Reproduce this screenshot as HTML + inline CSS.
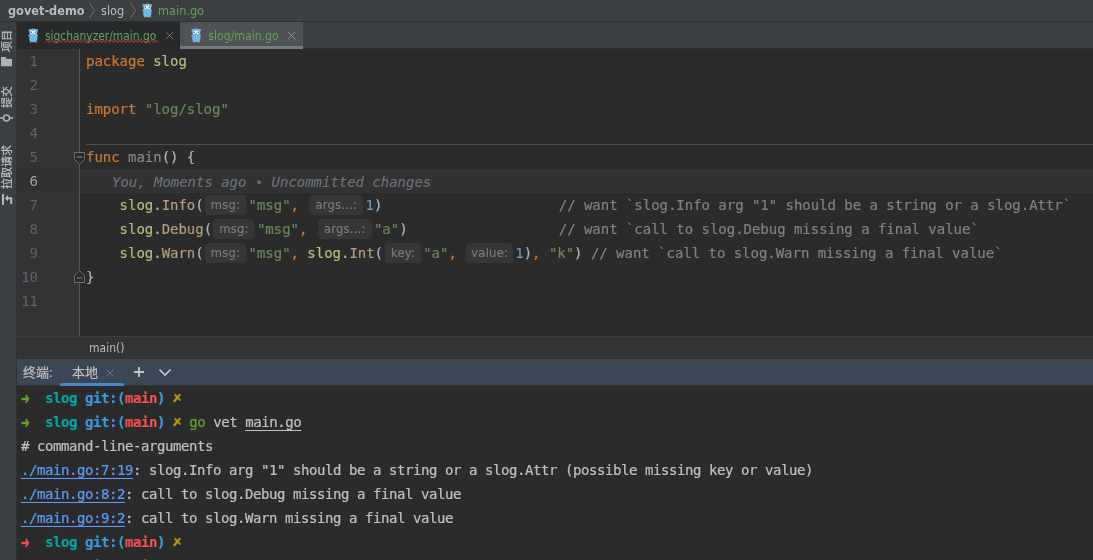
<!DOCTYPE html>
<html lang="zh">
<head>
<meta charset="utf-8">
<title>govet-demo – slog/main.go</title>
<style>
html,body{margin:0;padding:0;}
body{width:1093px;height:560px;overflow:hidden;background:#2b2b2b;position:relative;
  font-family:"DejaVu Sans Condensed","Liberation Sans","Noto Sans CJK SC",sans-serif;color:#bbbbbb;}
.abs{position:absolute;}
/* ---------- top navigation bar ---------- */
#nav{left:0;top:0;width:1093px;height:21px;background:#3c3f41;border-bottom:1px solid #2f3133;}
#nav span{position:absolute;top:-0.4px;line-height:21px;font-size:12.6px;white-space:pre;}
/* ---------- left tool stripe ---------- */
#stripe{left:0;top:22px;width:16px;height:538px;background:#3c3f41;border-right:1px solid #2f3133;}
.vt{position:absolute;left:1px;height:13px;transform-origin:0 0;transform:rotate(-90deg);white-space:pre;
  font-family:"Liberation Sans","Noto Sans CJK SC",sans-serif;font-size:11px;line-height:13px;color:#c0c0c0;-webkit-text-stroke:0.2px currentColor;}
/* ---------- editor tabs ---------- */
#tabs{left:17px;top:22px;width:1076px;height:27px;background:#3c3f41;}
.tab{position:absolute;top:0;height:27px;}
.tab .t{position:absolute;top:0.6px;line-height:26px;font-size:11.9px;color:#62a355;white-space:pre;}
/* ---------- editor ---------- */
#gutter{left:17px;top:49px;width:62px;height:287px;background:#313335;border-right:1px solid #555555;}
#editor{left:80px;top:49px;width:1013px;height:287px;background:#2b2b2b;}
.ln{position:absolute;right:41px;width:40px;text-align:right;height:24px;line-height:24px;
  font-family:"DejaVu Sans Mono","Liberation Mono",monospace;font-size:14px;letter-spacing:-0.0287px;color:#606366;}
.cl{position:absolute;left:6px;height:24px;line-height:24px;white-space:pre;
  font-family:"DejaVu Sans Mono","Liberation Mono",monospace;font-size:14px;letter-spacing:-0.0287px;color:#a9b7c6;-webkit-text-stroke:0.2px currentColor;}
.k{color:#cc7832;}.s{color:#6a8759;}.p{color:#afbf7e;}.f{color:#b09d79;}.n{color:#6897bb;}.c{color:#808080;}
.h{display:inline-block;height:20px;line-height:19px;vertical-align:top;margin-top:2px;border-radius:4px;background:#353637;
  color:#787b7e;font-family:"DejaVu Sans Condensed","Liberation Sans",sans-serif;font-size:12.8px;letter-spacing:0.25px;text-align:center;}
/* ---------- editor breadcrumb ---------- */
#crumb{left:17px;top:336px;width:1076px;height:22px;background:#313335;border-top:1px solid #3c3c3c;}
/* ---------- terminal ---------- */
#thead{left:17px;top:359px;width:1076px;height:26px;background:#3b4754;border-bottom:1px solid #303234;}
#thead span{position:absolute;top:0.7px;line-height:26px;font-size:13px;white-space:pre;
  font-family:"Liberation Sans","Noto Sans CJK SC",sans-serif;color:#c0c0c0;-webkit-text-stroke:0.2px currentColor;}
#term{left:17px;top:386px;width:1076px;height:174px;background:#2b2b2b;overflow:hidden;}
.tl{position:absolute;left:4px;height:24px;line-height:24px;white-space:pre;
  font-family:"DejaVu Sans Mono","Liberation Mono",monospace;font-size:14px;letter-spacing:-0.4287px;color:#c0c0c0;-webkit-text-stroke:0.2px currentColor;}
.tl b{font-weight:bold;}
.ar{display:inline-block;width:8px;height:24px;vertical-align:top;position:relative;letter-spacing:0;}
.ar i{position:absolute;left:0;top:0;font-style:normal;font-family:"DejaVu Sans",sans-serif;font-weight:bold;line-height:24px;transform-origin:0 50%;}
.ar.a i{font-size:16.5px;left:-0.2px;top:0.55px;transform:scale(0.63,0.97);-webkit-text-stroke:0.5px currentColor;}
.ar.x i{font-size:14px;left:-2.2px;top:0.2px;transform:skewX(14deg) scale(1.1,0.78);-webkit-text-stroke:0.3px currentColor;}
.g{color:#5fa52a;}.cy{color:#00a6a6;}.bl{color:#3b9ade;}.r{color:#f0524f;}.y{color:#be9b10;}
.u{text-decoration:underline;text-underline-offset:3px;text-decoration-thickness:1px;}
.lk{color:#589df6;text-decoration:underline;text-underline-offset:3px;text-decoration-thickness:1px;}
</style>
</head>
<body>
<div id="root" style="position:absolute;left:0;top:0;width:1093px;height:560px;overflow:hidden;will-change:transform">

<!-- top navigation bar -->
<div id="nav" class="abs">
  <span style="left:8px;font-weight:bold;color:#bbbbbb">govet-demo</span>
  <svg class="abs" style="left:88px;top:2px" width="8" height="17" viewBox="0 0 8 17"><path d="M1.5 1 L6.5 8.5 L1.5 16" fill="none" stroke="#6b6e70" stroke-width="1"/></svg>
  <span style="left:101px;color:#bbbbbb">slog</span>
  <svg class="abs" style="left:129px;top:2px" width="8" height="17" viewBox="0 0 8 17"><path d="M1.5 1 L6.5 8.5 L1.5 16" fill="none" stroke="#6b6e70" stroke-width="1"/></svg>
  <svg class="abs gopher" style="left:141.8px;top:2.6px" width="10.6" height="15" viewBox="0 0 12 15" preserveAspectRatio="none"><g>
      <circle cx="2.0" cy="2.3" r="1.4" fill="#6cb8e6"/>
      <circle cx="10.0" cy="2.3" r="1.4" fill="#6cb8e6"/>
      <ellipse cx="1.0" cy="7.7" rx="0.8" ry="0.7" fill="#c8a27c"/>
      <ellipse cx="11.0" cy="7.7" rx="0.8" ry="0.7" fill="#c8a27c"/>
      <ellipse cx="2.8" cy="13.9" rx="0.9" ry="0.7" fill="#c8a27c"/>
      <ellipse cx="9.2" cy="13.9" rx="0.9" ry="0.7" fill="#c8a27c"/>
      <path d="M6 0.5 C9.2 0.5 10.4 2.6 10.4 5.2 L10.7 10.5 C10.7 13.2 8.9 14.3 6 14.3 C3.1 14.3 1.3 13.2 1.3 10.5 L1.6 5.2 C1.6 2.6 2.8 0.5 6 0.5 Z" fill="#6cb8e6"/>
      <circle cx="4.4" cy="4.2" r="1.75" fill="#ffffff"/>
      <circle cx="7.6" cy="4.2" r="1.75" fill="#ffffff"/>
      <circle cx="3.9" cy="4.3" r="0.7" fill="#3a3a3a"/>
      <circle cx="8.1" cy="4.3" r="0.7" fill="#3a3a3a"/>
      <ellipse cx="6" cy="5.9" rx="1.1" ry="0.6" fill="#a9b4bb"/>
    </g></svg>
  <span style="left:158px;color:#62a355">main.go</span>
</div>



<!-- left tool stripe -->
<div id="stripe" class="abs">
  <div class="vt" style="top:29.5px">项目</div>
  <svg class="abs" style="left:1px;top:35px" width="12" height="10" viewBox="0 0 12 10"><path d="M0 0 H4.8 L5.6 2 H11 V9.2 H0 Z" fill="#afb1b3"/></svg>
  <div class="vt" style="top:86px">提交</div>
  <svg class="abs" style="left:0;top:91px" width="14" height="10" viewBox="0 0 14 10"><path d="M0 5 H13" stroke="#aeb0b2" stroke-width="1.6"/><circle cx="6.5" cy="5" r="3" fill="#3c3f41" stroke="#aeb0b2" stroke-width="1.6"/></svg>
  <div class="vt" style="top:167px">拉取请求</div>
  <svg class="abs" style="left:1px;top:172px" width="12" height="11" viewBox="0 0 12 11"><path d="M2 0 V11" stroke="#b4b6b8" stroke-width="2.1"/><path d="M6 4.3 H10.2 V10" stroke="#b4b6b8" stroke-width="2.1" fill="none"/><path d="M3.8 4.3 L7 1 V7.6 Z" fill="#b4b6b8"/></svg>
</div>

<!-- editor tabs -->
<div id="tabs" class="abs">
  <div class="tab" style="left:0;width:163px;background:#27292b">
    <svg class="abs" style="left:10.8px;top:5.5px" width="10.6" height="15" viewBox="0 0 12 15" preserveAspectRatio="none"><g>
      <circle cx="2.0" cy="2.3" r="1.4" fill="#6cb8e6"/>
      <circle cx="10.0" cy="2.3" r="1.4" fill="#6cb8e6"/>
      <ellipse cx="1.0" cy="7.7" rx="0.8" ry="0.7" fill="#c8a27c"/>
      <ellipse cx="11.0" cy="7.7" rx="0.8" ry="0.7" fill="#c8a27c"/>
      <ellipse cx="2.8" cy="13.9" rx="0.9" ry="0.7" fill="#c8a27c"/>
      <ellipse cx="9.2" cy="13.9" rx="0.9" ry="0.7" fill="#c8a27c"/>
      <path d="M6 0.5 C9.2 0.5 10.4 2.6 10.4 5.2 L10.7 10.5 C10.7 13.2 8.9 14.3 6 14.3 C3.1 14.3 1.3 13.2 1.3 10.5 L1.6 5.2 C1.6 2.6 2.8 0.5 6 0.5 Z" fill="#6cb8e6"/>
      <circle cx="4.4" cy="4.2" r="1.75" fill="#ffffff"/>
      <circle cx="7.6" cy="4.2" r="1.75" fill="#ffffff"/>
      <circle cx="3.9" cy="4.3" r="0.7" fill="#3a3a3a"/>
      <circle cx="8.1" cy="4.3" r="0.7" fill="#3a3a3a"/>
      <ellipse cx="6" cy="5.9" rx="1.1" ry="0.6" fill="#a9b4bb"/>
    </g></svg>
    <span class="t" style="left:28px">sigchanyzer/main.go</span>
    <svg class="abs" style="left:0;top:0.2px" width="163" height="27" viewBox="0 0 163 27"><path d="M28.5 20.6 L30.5 17.8 L32.5 20.6 L34.5 17.8 L36.5 20.6 L38.5 17.8 L40.5 20.6 L42.5 17.8 L44.5 20.6 L46.5 17.8 L48.5 20.6 L50.5 17.8 L52.5 20.6 L54.5 17.8 L56.5 20.6 L58.5 17.8 L60.5 20.6 L62.5 17.8 L64.5 20.6 L66.5 17.8 L68.5 20.6 L70.5 17.8 L72.5 20.6 L74.5 17.8 L76.5 20.6 L78.5 17.8 L80.5 20.6 L82.5 17.8 L84.5 20.6 L86.5 17.8 L88.5 20.6 L90.5 17.8 L92.5 20.6 L94.5 17.8 L96.5 20.6 L98.5 17.8 L100.5 20.6 L102.5 17.8 L104.5 20.6 L106.5 17.8 L108.5 20.6 L110.5 17.8 L112.5 20.6 L114.5 17.8 L116.5 20.6 L118.5 17.8 L120.5 20.6 L122.5 17.8 L124.5 20.6 L126.5 17.8 L128.5 20.6 L130.5 17.8 L132.5 20.6 L134.5 17.8 L136.5 20.6 L138.5 17.8 L140.5 20.6" fill="none" stroke="#bc3f3c" stroke-width="1"/></svg>
    <svg class="abs" style="left:148px;top:9px" width="9" height="9" viewBox="0 0 9 9"><path d="M0.7 0.7 L8.3 8.3 M8.3 0.7 L0.7 8.3" stroke="#707375" stroke-width="1" fill="none"/></svg>
  </div>
  <div class="tab" style="left:163px;width:123px;background:#4e5254">
    <svg class="abs" style="left:10.8px;top:5.5px" width="10.6" height="15" viewBox="0 0 12 15" preserveAspectRatio="none"><g>
      <circle cx="2.0" cy="2.3" r="1.4" fill="#6cb8e6"/>
      <circle cx="10.0" cy="2.3" r="1.4" fill="#6cb8e6"/>
      <ellipse cx="1.0" cy="7.7" rx="0.8" ry="0.7" fill="#c8a27c"/>
      <ellipse cx="11.0" cy="7.7" rx="0.8" ry="0.7" fill="#c8a27c"/>
      <ellipse cx="2.8" cy="13.9" rx="0.9" ry="0.7" fill="#c8a27c"/>
      <ellipse cx="9.2" cy="13.9" rx="0.9" ry="0.7" fill="#c8a27c"/>
      <path d="M6 0.5 C9.2 0.5 10.4 2.6 10.4 5.2 L10.7 10.5 C10.7 13.2 8.9 14.3 6 14.3 C3.1 14.3 1.3 13.2 1.3 10.5 L1.6 5.2 C1.6 2.6 2.8 0.5 6 0.5 Z" fill="#6cb8e6"/>
      <circle cx="4.4" cy="4.2" r="1.75" fill="#ffffff"/>
      <circle cx="7.6" cy="4.2" r="1.75" fill="#ffffff"/>
      <circle cx="3.9" cy="4.3" r="0.7" fill="#3a3a3a"/>
      <circle cx="8.1" cy="4.3" r="0.7" fill="#3a3a3a"/>
      <ellipse cx="6" cy="5.9" rx="1.1" ry="0.6" fill="#a9b4bb"/>
    </g></svg>
    <span class="t" style="left:28.3px;font-size:12.15px">slog/main.go</span>
    <svg class="abs" style="left:107px;top:9px" width="9" height="9" viewBox="0 0 9 9"><path d="M0.7 0.7 L8.3 8.3 M8.3 0.7 L0.7 8.3" stroke="#8a8d8f" stroke-width="1" fill="none"/></svg>
    <div class="abs" style="left:0;top:24px;width:123px;height:3px;background:#747a80"></div>
  </div>
</div>

<div class="abs" style="left:303px;top:48px;width:790px;height:1px;background:#2f3133"></div>

<!-- editor gutter -->
<div id="gutter" class="abs">
  <div class="abs" style="left:0;top:120px;width:62px;height:24px;background:#2f3133"></div>
  <div class="ln" style="top:0">1</div>
  <div class="ln" style="top:24px">2</div>
  <div class="ln" style="top:48px">3</div>
  <div class="ln" style="top:72px">4</div>
  <div class="ln" style="top:96px">5</div>
  <div class="ln" style="top:120px;color:#a4a3a3">6</div>
  <div class="ln" style="top:144px">7</div>
  <div class="ln" style="top:168px">8</div>
  <div class="ln" style="top:192px">9</div>
  <div class="ln" style="top:216px">10</div>
  <div class="ln" style="top:240px">11</div>
</div>

<!-- editor -->
<div id="editor" class="abs">
  <div class="abs" style="left:0;top:120px;width:1013px;height:24px;background:#323232"></div>
  <div class="abs" style="left:6px;top:95px;width:1007px;height:1px;background:#4d4d4d"></div>
  <div class="cl" style="top:0"><span class="k">package</span> <span class="p">slog</span></div>
  <div class="cl" style="top:48px"><span class="k">import</span> <span class="s">"log/slog"</span></div>
  <div class="cl" style="top:96px"><span class="k">func</span> <span style="color:#85878a">main</span>() {</div>
  <div class="cl" style="top:121px;left:32px;color:#69717a;font-style:italic">You, Moments ago <span style="display:inline-block;width:8.4px;text-align:center;font-size:11.5px;letter-spacing:0">•</span> Uncommitted changes</div>
  <div class="cl" style="top:144px">    <span class="p">slog</span>.<span class="f">Info</span>(<span class="h" style="width:41px;margin-left:1.4px;margin-right:2.5px">msg:</span><span class="s">"msg"</span><span class="k">,</span> <span class="h" style="width:54px;margin-left:2px;margin-right:2.2px">args...:</span><span class="n">1</span>)                     <span class="c">// want `slog.Info arg "1" should be a string or a slog.Attr`</span></div>
  <div class="cl" style="top:168px">    <span class="p">slog</span>.<span class="f">Debug</span>(<span class="h" style="width:41px;margin-left:1.4px;margin-right:2.5px">msg:</span><span class="s">"msg"</span><span class="k">,</span> <span class="h" style="width:54px;margin-left:2px;margin-right:2.2px">args...:</span><span class="s">"a"</span>)                  <span class="c">// want `call to slog.Debug missing a final value`</span></div>
  <div class="cl" style="top:192px">    <span class="p">slog</span>.<span class="f">Warn</span>(<span class="h" style="width:41px;margin-left:1.4px;margin-right:2.5px">msg:</span><span class="s">"msg"</span><span class="k">,</span> <span class="p">slog</span>.<span class="f">Int</span>(<span class="h" style="width:36px;margin-left:2px;margin-right:2.2px">key:</span><span class="s">"a"</span><span class="k">,</span> <span class="h" style="width:47px;margin-left:1px;margin-right:2.1px">value:</span><span class="n">1</span>)<span class="k">,</span> <span class="s">"k"</span>) <span class="c">// want `call to slog.Warn missing a final value`</span></div>
  <div class="cl" style="top:216px">}</div>
</div>

<!-- fold markers -->
<svg class="abs" style="left:74px;top:152px" width="12" height="13" viewBox="0 0 12 13"><path d="M0.5 0.5 H10.5 V7.5 L5.5 12.4 L0.5 7.5 Z" fill="#2b2b2b" stroke="#6c6f71" stroke-width="1"/><path d="M3 5 H8.2" stroke="#8a8d8f" stroke-width="1"/></svg>
<svg class="abs" style="left:74px;top:270px" width="12" height="13" viewBox="0 0 12 13"><path d="M0.5 12.5 H10.5 V5.5 L5.5 0.6 L0.5 5.5 Z" fill="#2b2b2b" stroke="#6c6f71" stroke-width="1"/><path d="M3 8 H8.2" stroke="#8a8d8f" stroke-width="1"/></svg>

<!-- editor breadcrumb -->
<div id="crumb" class="abs"><span class="abs" style="left:72px;top:0;line-height:22px;font-size:12px;color:#bbbbbb">main()</span></div>

<!-- terminal header -->
<div id="thead" class="abs">
  <span style="left:6px">终端:</span>
  <span style="left:55px">本地</span>
  <svg class="abs" style="left:88.5px;top:10px" width="8" height="8" viewBox="0 0 8 8"><path d="M0.6 0.6 L7.4 7.4 M7.4 0.6 L0.6 7.4" stroke="#6b7785" stroke-width="1" fill="none"/></svg>
  <div class="abs" style="left:43px;top:24px;width:64px;height:3px;border-radius:1.5px;background:#4a88c7"></div>
  <svg class="abs" style="left:116px;top:7px" width="12" height="12" viewBox="0 0 12 12"><path d="M6 1 V11 M1 6 H11" stroke="#c5c7c9" stroke-width="1.8" fill="none"/></svg>
  <svg class="abs" style="left:141px;top:9px" width="14" height="9" viewBox="0 0 14 9"><path d="M1.5 1.5 L7 7 L12.5 1.5" stroke="#c5c7c9" stroke-width="1.6" fill="none"/></svg>
</div>

<!-- terminal -->
<div id="term" class="abs">
  <div class="tl" style="top:0"><b class="g ar a"><i>➜</i></b>  <b class="cy">slog</b> <b class="bl">git:(</b><b class="r">main</b><b class="bl">)</b> <b class="y ar x"><i>✗</i></b></div>
  <div class="tl" style="top:24px"><b class="g ar a"><i>➜</i></b>  <b class="cy">slog</b> <b class="bl">git:(</b><b class="r">main</b><b class="bl">)</b> <b class="y ar x"><i>✗</i></b> <span class="g">go</span> vet <span class="u">main.go</span></div>
  <div class="tl" style="top:48px"># command-line-arguments</div>
  <div class="tl" style="top:72px"><span class="lk">./main.go:7:19</span>: slog.Info arg "1" should be a string or a slog.Attr (possible missing key or value)</div>
  <div class="tl" style="top:96px"><span class="lk">./main.go:8:2</span>: call to slog.Debug missing a final value</div>
  <div class="tl" style="top:120px"><span class="lk">./main.go:9:2</span>: call to slog.Warn missing a final value</div>
  <div class="tl" style="top:144px"><b class="r ar a"><i>➜</i></b>  <b class="cy">slog</b> <b class="bl">git:(</b><b class="r">main</b><b class="bl">)</b> <b class="y ar x"><i>✗</i></b></div>
  <div class="tl" style="top:168px"><b class="r ar a"><i>➜</i></b>  <b class="cy">slog</b> <b class="bl">git:(</b><b class="r">main</b><b class="bl">)</b> <b class="y ar x"><i>✗</i></b></div>
</div>

</div>
</body>
</html>
